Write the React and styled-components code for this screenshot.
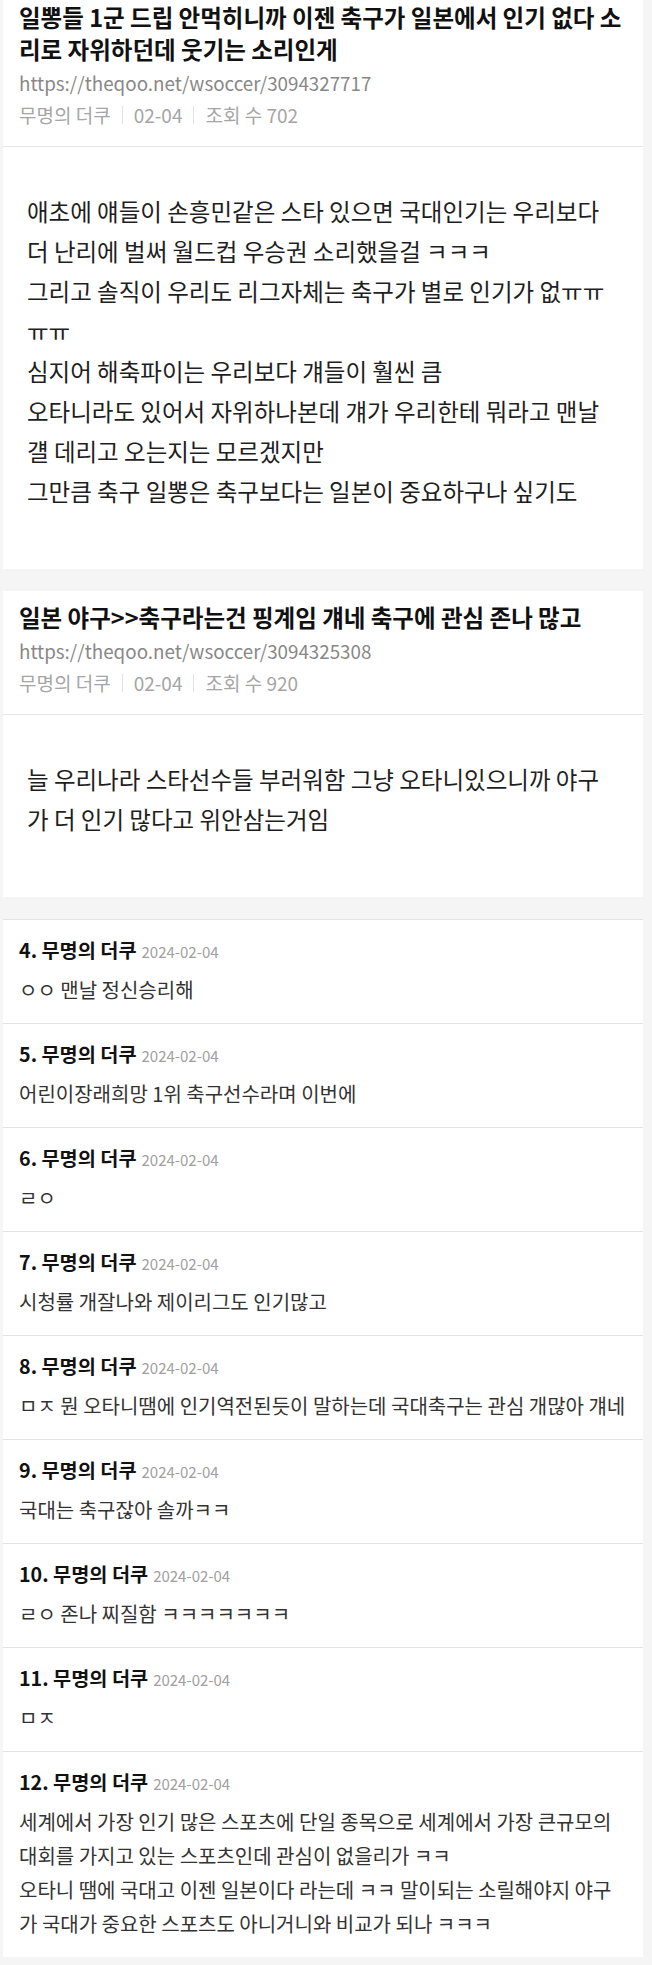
import React from 'react'
import styled, { createGlobalStyle } from 'styled-components'

const GlobalStyle = createGlobalStyle`
  html, body {
    margin: 0;
    padding: 0;
    background: #f5f5f5;
  }
  body {
    font-family: "Noto Sans CJK KR", "Noto Sans", sans-serif;
  }
`

const Page = styled.div`
  width: 640px;
  margin: -9px 0 0 3px;
  padding-bottom: 10px;
  display: flex;
  flex-direction: column;
  gap: 22px;
`

const Card = styled.section`
  background: #fff;
`

const Head = styled.div`
  padding: 10px 16px 18px;
  border-bottom: 1px solid #e6e6e6;
`

const Title = styled.h1`
  margin: 0;
  font-size: 23.5px;
  line-height: 32px;
  font-weight: 700;
  color: #111;
`

const Url = styled.div`
  margin-top: 4px;
  font-size: 18.8px;
  line-height: 28px;
  color: #888;
`

const Meta = styled.div`
  margin-top: 5px;
  display: flex;
  align-items: center;
  font-size: 19px;
  line-height: 26px;
  color: #a5a5a5;
`

const Bar = styled.span`
  width: 1px;
  height: 18px;
  background: #e2e2e2;
  margin: 0 11px;
`

const Body = styled.div`
  padding: 44px 24px 58px;
  font-size: 23.5px;
  line-height: 40px;
  color: #1e1e1e;
`

const CommentList = styled.section`
  background: #fff;
`

const Comment = styled.article`
  border-top: 1px solid #e3e3e3;
  padding: 16px 16px;
`

const CommentHead = styled.div`
  display: flex;
  align-items: baseline;
  height: 28px;
  font-size: 19.7px;
  line-height: 28px;
  font-weight: 700;
  color: #111;
`

const CommentDate = styled.span`
  margin-left: 5px;
  font-size: 15px;
  line-height: 1;
  font-weight: 400;
  color: #a0a0a0;
`

const CommentText = styled.div`
  margin-top: 9px;
  font-size: 20px;
  line-height: 34px;
  color: #333;
`

const posts = [
  {
    title: ['일뽕들 1군 드립 안먹히니까 이젠 축구가 일본에서 인기 없다 소', '리로 자위하던데 웃기는 소리인게'],
    url: 'https://theqoo.net/wsoccer/3094327717',
    date: '02-04',
    views: 702,
    body: [
      '애초에 얘들이 손흥민같은 스타 있으면 국대인기는 우리보다',
      '더 난리에 벌써 월드컵 우승권 소리했을걸 ㅋㅋㅋ',
      '그리고 솔직이 우리도 리그자체는 축구가 별로 인기가 없ㅠㅠ',
      'ㅠㅠ',
      '심지어 해축파이는 우리보다 걔들이 훨씬 큼',
      '오타니라도 있어서 자위하나본데 걔가 우리한테 뭐라고 맨날',
      '걜 데리고 오는지는 모르겠지만',
      '그만큼 축구 일뽕은 축구보다는 일본이 중요하구나 싶기도',
    ],
  },
  {
    title: ['일본 야구>>축구라는건 핑계임 걔네 축구에 관심 존나 많고'],
    url: 'https://theqoo.net/wsoccer/3094325308',
    date: '02-04',
    views: 920,
    body: [
      '늘 우리나라 스타선수들 부러워함 그냥 오타니있으니까 야구',
      '가 더 인기 많다고 위안삼는거임',
    ],
  },
]

const comments = [
  { no: 4, text: ['ㅇㅇ 맨날 정신승리해'] },
  { no: 5, text: ['어린이장래희망 1위 축구선수라며 이번에'] },
  { no: 6, text: ['ㄹㅇ'] },
  { no: 7, text: ['시청률 개잘나와 제이리그도 인기많고'] },
  { no: 8, text: ['ㅁㅈ 뭔 오타니땜에 인기역전된듯이 말하는데 국대축구는 관심 개많아 걔네'] },
  { no: 9, text: ['국대는 축구잖아 솔까ㅋㅋ'] },
  { no: 10, text: ['ㄹㅇ 존나 찌질함 ㅋㅋㅋㅋㅋㅋㅋ'] },
  { no: 11, text: ['ㅁㅈ'] },
  {
    no: 12,
    text: [
      '세계에서 가장 인기 많은 스포츠에 단일 종목으로 세계에서 가장 큰규모의',
      '대회를 가지고 있는 스포츠인데 관심이 없을리가 ㅋㅋ',
      '오타니 땜에 국대고 이젠 일본이다 라는데 ㅋㅋ 말이되는 소릴해야지 야구',
      '가 국대가 중요한 스포츠도 아니거니와 비교가 되나 ㅋㅋㅋ',
    ],
  },
]

const Lines = ({ lines }) =>
  lines.map((l, i) => (
    <React.Fragment key={i}>
      {i > 0 && <br />}
      {l}
    </React.Fragment>
  ))

const App = () => {
  return (
    <Page>
      <GlobalStyle />
      {posts.map((p) => (
        <Card key={p.url}>
          <Head>
            <Title><Lines lines={p.title} /></Title>
            <Url>{p.url}</Url>
            <Meta>
              <span>무명의 더쿠</span>
              <Bar />
              <span>{p.date}</span>
              <Bar />
              <span>조회 수 {p.views}</span>
            </Meta>
          </Head>
          <Body><Lines lines={p.body} /></Body>
        </Card>
      ))}
      <CommentList>
        {comments.map((c) => (
          <Comment key={c.no}>
            <CommentHead>
              {c.no}. 무명의 더쿠
              <CommentDate>2024-02-04</CommentDate>
            </CommentHead>
            <CommentText><Lines lines={c.text} /></CommentText>
          </Comment>
        ))}
      </CommentList>
    </Page>
  )
}

export default App
